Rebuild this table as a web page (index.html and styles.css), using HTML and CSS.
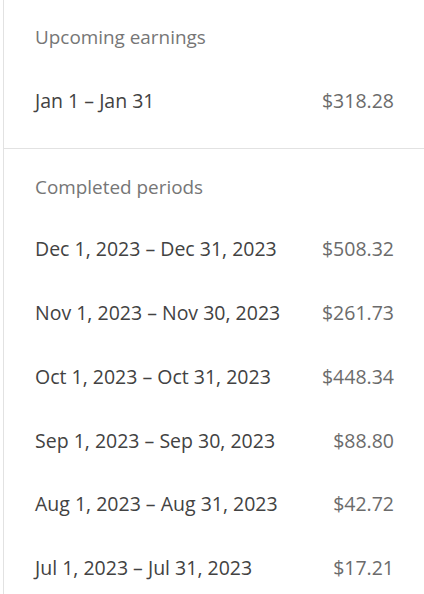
FILE: index.html
```html
<!DOCTYPE html>
<html>
<head>
<meta charset="utf-8">
<link rel="stylesheet" href="styles.css">
</head>
<body>
<div class="panel">
  <section class="section first">
    <h2 class="heading">Upcoming earnings</h2>
    <div class="row"><span class="period">Jan 1 – Jan 31</span><span class="amount">$318.28</span></div>
  </section>
  <section class="section">
    <h2 class="heading">Completed periods</h2>
    <div class="row"><span class="period">Dec 1, 2023 – Dec 31, 2023</span><span class="amount">$508.32</span></div>
    <div class="row"><span class="period">Nov 1, 2023 – Nov 30, 2023</span><span class="amount">$261.73</span></div>
    <div class="row"><span class="period">Oct 1, 2023 – Oct 31, 2023</span><span class="amount">$448.34</span></div>
    <div class="row"><span class="period">Sep 1, 2023 – Sep 30, 2023</span><span class="amount">$88.80</span></div>
    <div class="row"><span class="period">Aug 1, 2023 – Aug 31, 2023</span><span class="amount">$42.72</span></div>
    <div class="row"><span class="period">Jul 1, 2023 – Jul 31, 2023</span><span class="amount">$17.21</span></div>
  </section>
</div>
</body>
</html>
```
FILE: styles.css
```css
html, body {
  margin: 0;
  padding: 0;
  background: #fff;
}
body {
  font-family: "Open Sans", sans-serif;
  height: 594px;
  overflow: hidden;
}
.panel {
  margin-left: 3px;
  border-left: 1px solid #e2e2e2;
  min-height: 594px;
}
.section {
  padding: 24px 30px 0 31px;
}
.section.first {
  padding-top: 23px;
  padding-bottom: 15px;
  border-bottom: 1px solid #e2e2e2;
}
.heading {
  margin: 0 0 16px;
  font-size: 18.9px;
  line-height: 28px;
  font-weight: 400;
  color: #767676;
}
.section.first .heading {
  margin-bottom: 18px;
}
.row {
  height: 63.8px;
  display: flex;
  align-items: center;
  justify-content: space-between;
  font-size: 19.5px;
}
.period {
  color: #424242;
}
.amount {
  color: #6b6b6b;
}
```
